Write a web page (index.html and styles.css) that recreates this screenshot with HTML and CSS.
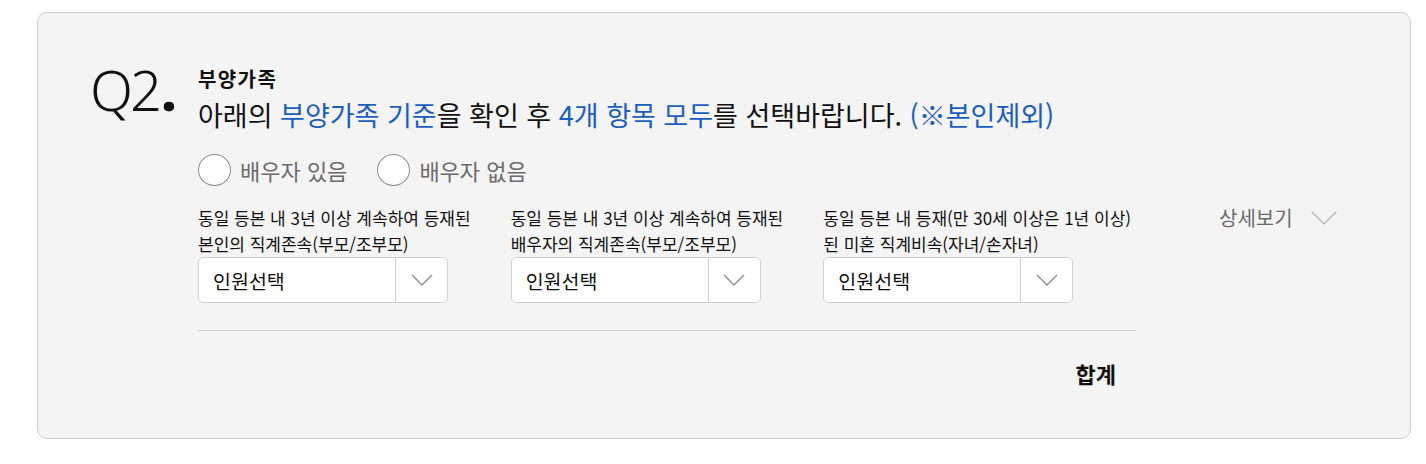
FILE: index.html
```html
<!DOCTYPE html>
<html lang="ko">
<head>
<meta charset="utf-8">
<title>부양가족</title>
<link rel="stylesheet" href="styles.css">
</head>
<body>
<div class="card">
  <div class="qnum">Q2<span class="dot">.</span></div>
  <div class="content">
    <div class="title">부양가족</div>
    <div class="sentence">아래의 <span class="blue">부양가족 기준</span>을 확인 후 <span class="blue">4개 항목 모두</span>를 선택바랍니다. <span class="blue">(※본인제외)</span></div>
    <div class="radios">
      <label class="radio"><span class="circle"></span><span class="rlabel">배우자 있음</span></label>
      <label class="radio"><span class="circle"></span><span class="rlabel">배우자 없음</span></label>
    </div>
    <div class="fieldrow">
      <div class="fields">
        <div class="field">
          <div class="flabel">동일 등본 내 3년 이상 계속하여 등재된<br>본인의 직계존속(부모/조부모)</div>
          <div class="select"><span class="stext">인원선택</span><span class="sbtn"><svg width="22" height="12" viewBox="0 0 22 12"><path d="M1 1 L11 11 L21 1" fill="none" stroke="#8a8a8a" stroke-width="1.3"/></svg></span></div>
        </div>
        <div class="field">
          <div class="flabel">동일 등본 내 3년 이상 계속하여 등재된<br>배우자의 직계존속(부모/조부모)</div>
          <div class="select"><span class="stext">인원선택</span><span class="sbtn"><svg width="22" height="12" viewBox="0 0 22 12"><path d="M1 1 L11 11 L21 1" fill="none" stroke="#8a8a8a" stroke-width="1.3"/></svg></span></div>
        </div>
        <div class="field">
          <div class="flabel">동일 등본 내 등재(만 30세 이상은 1년 이상)<br>된 미혼 직계비속(자녀/손자녀)</div>
          <div class="select"><span class="stext">인원선택</span><span class="sbtn"><svg width="22" height="12" viewBox="0 0 22 12"><path d="M1 1 L11 11 L21 1" fill="none" stroke="#8a8a8a" stroke-width="1.3"/></svg></span></div>
        </div>
      </div>
      <div class="more">상세보기<svg width="26" height="14" viewBox="0 0 26 14"><path d="M1 1 L13 13 L25 1" fill="none" stroke="#b0b0b0" stroke-width="1.2"/></svg></div>
    </div>
    <div class="total">
      <span class="tlabel">합계</span>
    </div>
  </div>
</div>
</body>
</html>
```

FILE: styles.css
```css
html, body {
  margin: 0;
  padding: 0;
  background: #ffffff;
}
body {
  font-family: "Noto Sans CJK KR", "Noto Sans", sans-serif;
  color: #111;
  padding: 12px 15px 0 37px;
}
.card {
  box-sizing: border-box;
  width: 1374px;
  height: 427px;
  background: #f4f4f4;
  border: 1px solid #cfcfcf;
  border-radius: 10px;
  display: flex;
  padding: 53px 0 0 52px;
}
.qnum {
  width: 108px;
  font-family: "Noto Sans", sans-serif;
  font-weight: 300;
  font-size: 56px;
  line-height: 56px;
  letter-spacing: -3px;
  color: #111;
  margin-top: -5px;
}
.qnum .dot {
  font-weight: 800;
  margin-left: 2px;
}
.content {
  display: flex;
  flex-direction: column;
}
.title {
  font-size: 20px;
  font-weight: 700;
  line-height: 26px;
  letter-spacing: 1.4px;
}
.sentence {
  font-size: 27px;
  line-height: 36px;
  margin-top: 5px;
}
.blue {
  color: #1b5dbf;
}
.radios {
  display: flex;
  gap: 30px;
  margin-top: 21px;
}
.radio {
  display: flex;
  align-items: center;
  gap: 9px;
}
.circle {
  box-sizing: border-box;
  width: 33px;
  height: 32px;
  border-radius: 50%;
  border: 1.5px solid #8c8c8c;
  background: #fff;
}
.rlabel {
  font-size: 22px;
  color: #6b6b6b;
  line-height: 32px;
}
.fieldrow {
  display: flex;
  margin-top: 19px;
}
.fields {
  width: 938px;
  display: grid;
  grid-template-columns: repeat(3, 1fr);
}
.flabel {
  font-size: 17px;
  line-height: 26px;
  white-space: nowrap;
}
.select {
  box-sizing: border-box;
  width: 250px;
  height: 46px;
  margin-top: 0;
  background: #fff;
  border: 1px solid #d2d2d2;
  border-radius: 5px;
  display: flex;
  align-items: center;
}
.stext {
  flex: 1;
  font-size: 19.5px;
  padding-left: 14px;
}
.sbtn {
  width: 51px;
  height: 100%;
  border-left: 1px solid #d2d2d2;
  display: flex;
  align-items: center;
  justify-content: center;
}
.more {
  margin-left: 83px;
  font-size: 20px;
  color: #6b6b6b;
  line-height: 26px;
  display: flex;
  align-items: center;
  gap: 18px;
  height: 26px;
}
.total {
  width: 938px;
  border-top: 1px solid #cfcfcf;
  margin-top: 27px;
  display: flex;
  justify-content: flex-end;
  padding-top: 27px;
}
.tlabel {
  font-size: 22px;
  font-weight: 700;
  margin-right: 20px;
  line-height: 30px;
}
```
